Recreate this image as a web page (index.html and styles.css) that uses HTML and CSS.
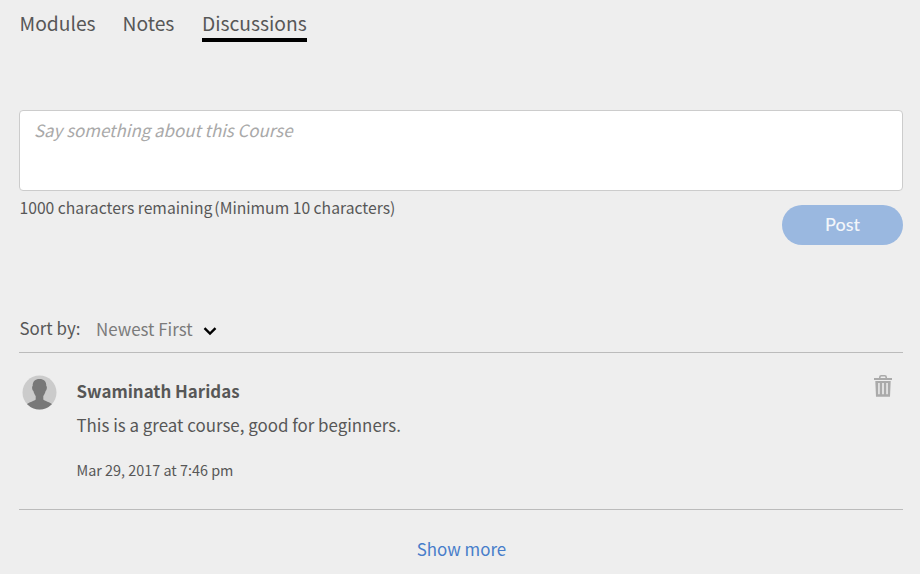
FILE: index.html
```
<!DOCTYPE html>
<html lang="en">
<head>
<meta charset="utf-8">
<title>Discussions</title>
<link rel="stylesheet" href="styles.css">
</head>
<body>
<nav class="tabs">
<a class="tab tab-modules">Modules</a>
<a class="tab tab-notes">Notes</a>
<a class="tab active">Discussions</a>
</nav>
<main>
<div class="composer"><span class="placeholder">Say something about this Course</span></div>
<div class="composer-foot">
<div class="remaining"><span>1000 characters remaining</span><span class="minimum">(Minimum 10 characters)</span></div>
<button class="post">Post</button>
</div>
<div class="sort">
<span class="sort-label">Sort by:</span>
<span class="sort-value">Newest First</span>
<svg class="chevron" width="14" height="10" viewBox="0 0 14 10"><path d="M1.5 2.2L7 7.5L12.5 2.2" fill="none" stroke="#000" stroke-width="2.4"/></svg>
</div>
<article class="comment">
<svg class="avatar" width="35" height="35" viewBox="0 0 35 35"><defs><clipPath id="disc"><circle cx="17.5" cy="17.5" r="17"/></clipPath></defs><circle cx="17.5" cy="17.5" r="17" fill="#cbcbcb"/><path clip-path="url(#disc)" fill="#787878" d="M17.5 4C21.8 4 24.5 6.5 24.3 11C25.3 11.2 25 15.2 23.6 16C23 18.5 22 20 21.3 21V24.5C22 26 28.5 27 30.5 29.5V35H4.5V29.5C6.5 27 13 26 13.7 24.5V21C13 20 12 18.5 11.4 16C10 15.2 9.7 11.2 10.7 11C10.5 6.5 13.2 4 17.5 4Z"/></svg>
<div class="comment-body">
<div class="author">Swaminath Haridas</div>
<div class="message">This is a great course, good for beginners.</div>
<div class="date">Mar 29, 2017 at 7:46 pm</div>
</div>
<svg class="trash" width="18" height="23" viewBox="0 0 18 23"><path fill="none" stroke="#aaa" stroke-width="1.6" d="M5.8 4V3.2Q5.8 1.7 7.3 1.7H10.7Q12.2 1.7 12.2 3.200V4"/><path fill="#aaa" d="M0 4H18V6H0Z"/><path fill="#aaa" fill-rule="evenodd" d="M1.3 7H16.7L16 22.700H2ZM4.200 9V20.300H5.700V9ZM8.200 9V20.300H9.800V9ZM12.300 9V20.300H13.800V9Z"/></svg>
</article>
<div class="more">Show more</div>
</main>
</body>
</html>
```
FILE: styles.css
```
* { box-sizing: border-box; }
body {
  margin: 0;
  height: 574px;
  overflow: hidden;
  background: #eee;
  color: #575757;
  font: 16.9px/24px "Noto Sans CJK SC", sans-serif;
}
.tabs { display: flex; height: 42px; padding: 9px 0 0 19.5px; }
.tab { font-size: 19.25px; line-height: 29px; height: 33px; white-space: nowrap; }
.tab-modules { width: 103px; }
.tab-notes { width: 79.5px; }
.active { width: 105px; border-bottom: 4px solid #000; }
main { padding: 68px 17px 0 19px; }
.composer {
  height: 81px;
  padding: 7px 14px;
  background: #fff;
  border: 1px solid #ccc;
  border-radius: 4px;
}
.placeholder { color: #a9a9a9; font-style: italic; }
.composer-foot { display: flex; justify-content: space-between; height: 120px; }
.remaining { padding: 5px 0 0 0.5px; font-size: 15.7px; white-space: nowrap; }
.minimum { margin-left: 2px; }
.post {
  width: 121px;
  height: 40px;
  margin-top: 14px;
  padding: 0 0 2px;
  border: 0;
  border-radius: 20px;
  background: #9ab8e0;
  color: #f3f6fa;
  font: 500 18px/38px Lato, sans-serif;
}
.sort { display: flex; height: 42px; padding: 5px 0 0 0.5px; border-bottom: 1px solid #bbb; }
.sort-label { width: 76.5px; }
.sort-value { width: 106.5px; color: #7b7b7b; margin-top: 1px; }
.chevron { margin-top: 10px; }
.comment { display: flex; height: 157px; border-bottom: 1px solid #bbb; padding: 0 11px 0 3px; }
.avatar { margin-top: 22px; flex: none; }
.comment-body { flex: 1; padding: 26px 0 0 19.5px; }
.author { font-weight: 700; }
.message { margin-top: 10px; }
.date { margin-top: 21px; font-size: 14.4px; }
.trash { margin-top: 21px; flex: none; }
.more { margin-top: 27px; padding-left: 1px; text-align: center; color: #477dca; }
```
